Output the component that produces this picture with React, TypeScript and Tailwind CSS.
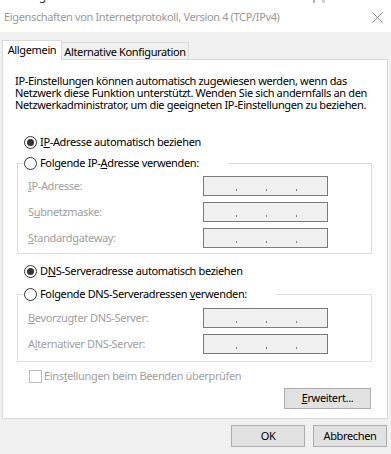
import React from "react";

function Radio({ checked }: { checked?: boolean }) {
  return (
    <svg width="13" height="13" viewBox="0 0 13 13" className="shrink-0">
      <circle cx="6.5" cy="6.5" r="6" fill="#fff" stroke="#333" />
      {checked && <circle cx="6.5" cy="6.5" r="3.5" fill="#333" />}
    </svg>
  );
}

function IpField() {
  return (
    <div className="flex h-[20px] w-[125px] items-start gap-[29px] border border-[#7a7a7a] bg-[#f0f0f0] pl-[32px] pt-[12px]">
      <span className="h-[2px] w-[1px] bg-[#7d7d9a]" />
      <span className="h-[2px] w-[1px] bg-[#7d7d9a]" />
      <span className="h-[2px] w-[1px] bg-[#7d7d9a]" />
    </div>
  );
}

function FieldRow({ label }: { label: React.ReactNode }) {
  return (
    <div className="flex h-[20px] items-center">
      <span className="w-[175px] whitespace-nowrap text-[#a0a0a0]">{label}</span>
      <IpField />
    </div>
  );
}

function Button({ children, width }: { children: React.ReactNode; width: string }) {
  return (
    <button className={`flex h-full items-center justify-center border border-[#adadad] bg-[#e1e1e1] ${width}`}>
      {children}
    </button>
  );
}

export default function App() {
  return (
    <div className="flex h-[454px] w-[391px] flex-col overflow-hidden bg-[#f0f0f0] font-['Noto_Sans',sans-serif] text-[11px] tracking-[-0.35px] text-black">
      {/* window behind the dialog, only its last pixels show */}
      <div className="flex h-[3px] overflow-hidden bg-white">
        <div className="-ml-[17px] -mt-[10px] w-[330px] whitespace-nowrap text-[12px] leading-[12px] text-[#333]">
          Verbindung herstellen über:
        </div>
        <div className="w-[2px] bg-[#b4b4b4]" />
        <div className="ml-[7px] w-[3px] bg-[#d4d4d4]" />
      </div>

      {/* title bar */}
      <div className="flex h-[29px] items-center justify-between bg-white pl-[4px] pr-[8px]">
        <span className="whitespace-nowrap text-[#999]">Eigenschaften von Internetprotokoll, Version 4 (TCP/IPv4)</span>
        <svg width="11" height="11" viewBox="0 0 11 11">
          <path d="M0.5 0.5L10.5 10.5M10.5 0.5L0.5 10.5" stroke="#8a8a8a" strokeWidth="1" />
        </svg>
      </div>

      <div className="flex flex-col pt-[8px]">
        {/* tabs */}
        <div className="flex items-end pl-[2px]">
          <div className="relative z-10 -mb-px flex h-[20px] w-[60px] items-center justify-center border border-b-0 border-[#d9d9d9] bg-white">
            Allgemein
          </div>
          <div className="-mb-px flex h-[18px] w-[127px] items-center justify-center border border-l-0 border-b-0 border-[#d9d9d9] pt-[1px]">
            Alternative Konfiguration
          </div>
        </div>

        {/* panel */}
        <div className="ml-[2px] flex w-[386px] flex-col border border-[#d9d9d9] bg-white">
          <p className="ml-[12px] mt-[15px] whitespace-nowrap leading-[12px]">
            IP-Einstellungen können automatisch zugewiesen werden, wenn das
            <br />
            Netzwerk diese Funktion unterstützt. Wenden Sie sich andernfalls an den
            <br />
            Netzwerkadministrator, um die geeigneten IP-Einstellungen zu beziehen.
          </p>

          <div className="ml-[21px] mt-[23px] flex h-[16px] items-center gap-[3px]">
            <Radio checked />
            <span>
              I<u>P</u>-Adresse automatisch beziehen
            </span>
          </div>

          <fieldset className="ml-[14px] mt-[5px] w-[355px] border border-[#dcdcdc] pb-[5px] pl-[6px] pt-[5px]">
            <legend className="flex h-[16px] items-center gap-[3px] pr-[29px]">
              <Radio />
              <span>
                Folgende IP-<u>A</u>dresse verwenden:
              </span>
            </legend>
            <div className="flex flex-col gap-[6px] pl-[4px]">
              <FieldRow
                label={
                  <>
                    <u>I</u>P-Adresse:
                  </>
                }
              />
              <FieldRow
                label={
                  <>
                    S<u>u</u>bnetzmaske:
                  </>
                }
              />
              <FieldRow
                label={
                  <>
                    <u>S</u>tandardgateway:
                  </>
                }
              />
            </div>
          </fieldset>

          <div className="ml-[21px] mt-[9px] flex h-[16px] items-center gap-[3px]">
            <Radio checked />
            <span>
              D<u>N</u>S-Serveradresse automatisch beziehen
            </span>
          </div>

          <fieldset className="ml-[14px] mt-[7px] w-[355px] border border-[#dcdcdc] pb-[7px] pl-[6px] pt-[6px]">
            <legend className="flex h-[16px] items-center gap-[3px] pr-[29px]">
              <Radio />
              <span>
                Folgende DNS-Serveradressen <u>v</u>erwenden:
              </span>
            </legend>
            <div className="flex flex-col gap-[6px] pl-[4px]">
              <FieldRow
                label={
                  <>
                    <u>B</u>evorzugter DNS-Server:
                  </>
                }
              />
              <FieldRow
                label={
                  <>
                    A<u>l</u>ternativer DNS-Server:
                  </>
                }
              />
            </div>
          </fieldset>

          <div className="ml-[26px] mt-[6px] flex h-[16px] items-center gap-[2px]">
            <span className="h-[13px] w-[13px] border border-[#bcbcbc] bg-white" />
            <span className="text-[#a0a0a0]">
              Eins<u>t</u>ellungen beim Beenden überprüfen
            </span>
          </div>

          <div className="mb-[9px] mt-[4px] flex h-[21px] justify-end pr-[16px]">
            <Button width="w-[87px]">
              <span>
                <u>E</u>rweitert...
              </span>
            </Button>
          </div>
        </div>

        {/* dialog buttons */}
        <div className="mt-[6px] flex h-[22px] justify-end gap-[8px] pr-[4px]">
          <Button width="w-[74px]">OK</Button>
          <Button width="w-[74px]">Abbrechen</Button>
        </div>
      </div>
    </div>
  );
}
